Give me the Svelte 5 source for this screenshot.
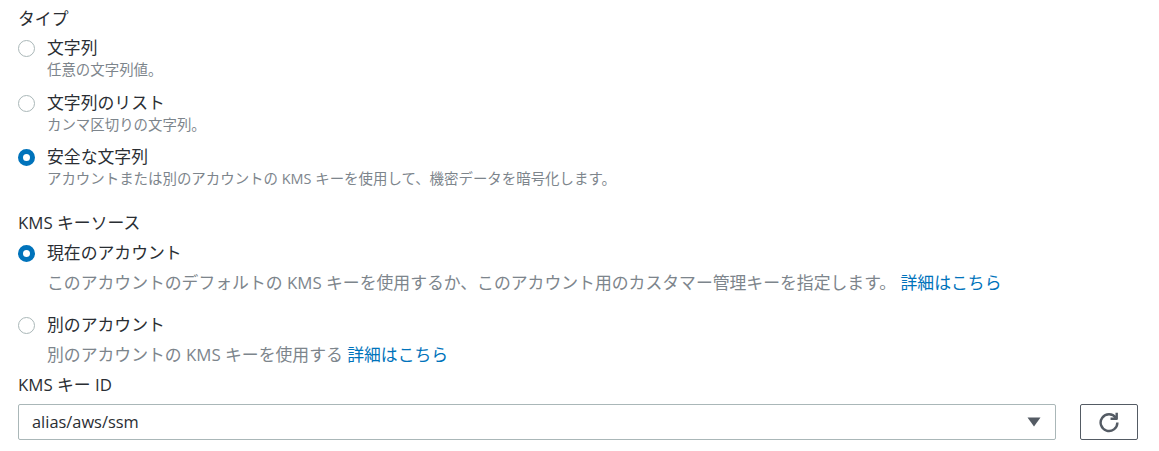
<script>
    const types = [
        { label: '文字列', desc: '任意の文字列値。', checked: false },
        { label: '文字列のリスト', desc: 'カンマ区切りの文字列。', checked: false },
        { label: '安全な文字列', desc: 'アカウントまたは別のアカウントの KMS キーを使用して、機密データを暗号化します。', checked: true }
    ];
</script>

<div class="form">
    <div class="label first">タイプ</div>
    <div class="types">
        {#each types as t}
            <div class="type-row">
                <span class="radio" class:checked={t.checked}></span>
                <div>
                    <div class="name">{t.label}</div>
                    <div class="small">{t.desc}</div>
                </div>
            </div>
        {/each}
    </div>

    <div class="label source">KMS キーソース</div>
    <div class="source-row one">
        <span class="radio checked"></span>
        <div>
            <div class="name">現在のアカウント</div>
            <div class="desc">このアカウントのデフォルトの KMS キーを使用するか、このアカウント用のカスタマー管理キーを指定します。 <a href="#top">詳細はこちら</a></div>
        </div>
    </div>
    <div class="source-row two">
        <span class="radio"></span>
        <div>
            <div class="name">別のアカウント</div>
            <div class="desc">別のアカウントの KMS キーを使用する <a href="#top">詳細はこちら</a></div>
        </div>
    </div>

    <div class="label key">KMS キー ID</div>
    <div class="select-row">
        <div class="select">
            <span class="value">alias/aws/ssm</span>
            <svg width="14" height="10" viewBox="0 0 14 10"><path d="M0.5 0.5h13L7 9.5z" fill="#545b64" /></svg>
        </div>
        <button class="refresh" aria-label="更新">
            <svg width="22" height="22" viewBox="0 0 20 20" fill="none" stroke="#545b64" stroke-width="2.2">
                <path d="M16.2 6.2A7.6 7.6 0 1 0 17.6 10.5" />
                <path d="M17 1.5v5.6h-5.6" stroke-linejoin="round" />
            </svg>
        </button>
    </div>
</div>

<style>
    :global(body) {
        margin: 0;
        background: #fff;
    }

    .form {
        padding: 9px 21px 0 18px;
        font-family: "Open Sans", "Noto Sans CJK JP", sans-serif;
        font-size: 16.84px;
        line-height: 20px;
        color: #2a2e33;
    }

    .label {
        height: 20px;
    }

    .types {
        margin-top: 9px;
        display: flex;
        flex-direction: column;
        gap: 11.5px;
    }

    .type-row,
    .source-row {
        display: flex;
        gap: 12px;
    }

    .radio {
        flex: none;
        box-sizing: border-box;
        width: 17px;
        height: 17px;
        margin-top: 2px;
        border: 1px solid #aab7b8;
        border-radius: 50%;
        background: #fff;
    }

    .radio.checked {
        border: 5px solid #0073bb;
    }

    .name {
        height: 20px;
    }

    .small {
        font-size: 14.45px;
        line-height: 24px;
        height: 23px;
        color: #7d858c;
    }

    .source {
        margin-top: 23px;
    }

    .source-row.one {
        margin-top: 10px;
    }

    .source-row.two {
        margin-top: 22px;
    }

    .desc {
        margin-top: 10px;
        color: #7d858c;
    }

    a {
        color: #0073bb;
        text-decoration: none;
    }

    .key {
        margin-top: 10px;
    }

    .select-row {
        margin-top: 9px;
        display: flex;
        gap: 24px;
    }

    .select {
        flex: 1;
        box-sizing: border-box;
        height: 36px;
        padding: 0 14px 0 13px;
        display: flex;
        align-items: center;
        justify-content: space-between;
        border: 1px solid #aab7b8;
        border-radius: 2px;
    }

    .value {
        font-size: 16.4px;
    }

    .refresh {
        box-sizing: border-box;
        width: 58px;
        height: 36px;
        padding: 0;
        display: flex;
        align-items: center;
        justify-content: center;
        border: 1px solid #545b64;
        border-radius: 2px;
        background: #fff;
    }
</style>
